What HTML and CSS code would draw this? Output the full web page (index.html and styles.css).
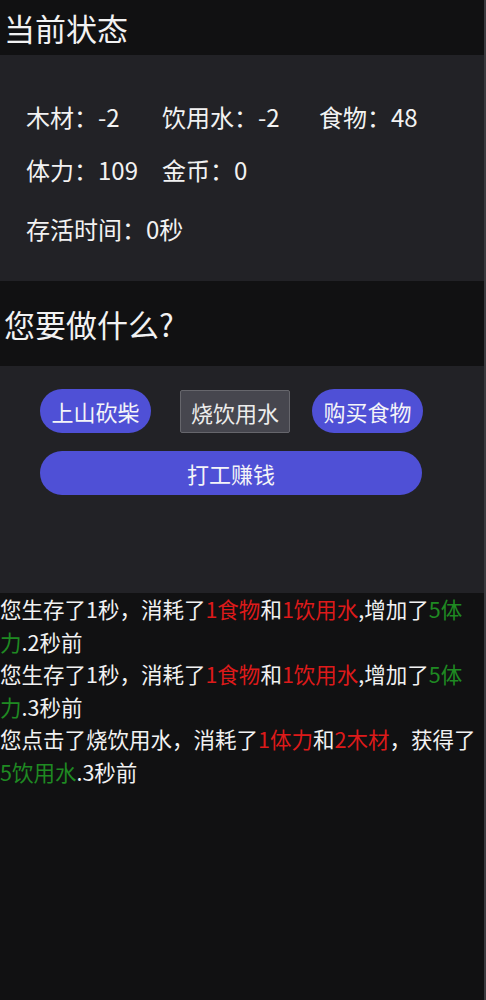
FILE: index.html
```html
<!DOCTYPE html>
<html lang="zh-CN">
<head>
    <meta charset="UTF-8">
    <meta name="viewport" content="width=device-width, initial-scale=1.0">
    <title>荒野求生</title>
    <link rel="stylesheet" href="styles.css">
</head>
<body>
    <div id="app">
        <h1 class="section-title status-title">当前状态</h1>
        <div class="panel status-panel">
            <div class="stat-grid">
                <div class="stat">木材：<span id="wood">-2</span></div>
                <div class="stat">饮用水：<span id="water">-2</span></div>
                <div class="stat">食物：<span id="food">48</span></div>
                <div class="stat">体力：<span id="stamina">109</span></div>
                <div class="stat">金币：<span id="gold">0</span></div>
            </div>
            <div class="stat survive">存活时间：<span id="time">0</span>秒</div>
        </div>

        <h1 class="section-title action-title">您要做什么?</h1>
        <div class="panel action-panel">
            <div class="action-row">
                <button class="btn">上山砍柴</button>
                <button class="btn btn-flat">烧饮用水</button>
                <button class="btn">购买食物</button>
            </div>
            <button class="btn btn-wide">打工赚钱</button>
        </div>

        <div id="log">
            <div class="log-line">您生存了1秒，消耗了<span class="minus">1食物</span>和<span class="minus">1饮用水</span>,增加了<span class="plus">5体</span><span class="plus">力</span>.2秒前</div>
            <div class="log-line">您生存了1秒，消耗了<span class="minus">1食物</span>和<span class="minus">1饮用水</span>,增加了<span class="plus">5体</span><span class="plus">力</span>.3秒前</div>
            <div class="log-line">您点击了烧饮用水，消耗了<span class="minus">1体力</span>和<span class="minus">2木材</span>，获得了<span class="plus">5饮用水</span>.3秒前</div>
        </div>
    </div>
</body>
</html>
```

FILE: styles.css
```css
html, body {
    margin: 0;
    padding: 0;
    background: #111112;
}

body {
    font-family: "Noto Sans CJK SC", "Noto Sans", sans-serif;
    color: #f2f2f2;
}

#app {
    width: 484px;
    min-height: 1000px;
    border-right: 2px solid #3a3a3e;
    background: #111112;
}

.section-title {
    margin: 0;
    padding-left: 4px;
    font-size: 31px;
    font-weight: 400;
    display: flex;
    align-items: center;
    background: #111112;
}

.status-title {
    height: 55px;
}

.action-title {
    height: 85px;
}

.panel {
    background: #222226;
}

.status-panel {
    padding: 44px 0 34px 26px;
    font-size: 24px;
    line-height: 36px;
}

.stat-grid {
    display: grid;
    grid-template-columns: 136px 157px auto;
    row-gap: 17px;
}

.stat {
    white-space: nowrap;
}

.survive {
    margin-top: 23px;
}

.action-panel {
    padding: 22px 0 98px 40px;
    display: flex;
    flex-direction: column;
    align-items: flex-start;
    gap: 18px;
}

.action-row {
    display: flex;
    align-items: center;
}

.btn {
    font-family: inherit;
    font-size: 22px;
    color: #f4f4f8;
    background: #4f50d6;
    border: none;
    border-radius: 22px;
    height: 44px;
    width: 111px;
    padding: 0;
    cursor: pointer;
}

.btn-flat {
    width: 110px;
    height: 43px;
    margin: 2px 22px 0 29px;
    background: #46464e;
    border: 1px solid #66666c;
    border-radius: 2px;
    color: #ececec;
}

.btn-wide {
    width: 382px;
}

#log {
    width: 480px;
    font-size: 21.5px;
    line-height: 32.5px;
}

.minus {
    color: #dd1a1a;
}

.plus {
    color: #1f8a22;
}
```
